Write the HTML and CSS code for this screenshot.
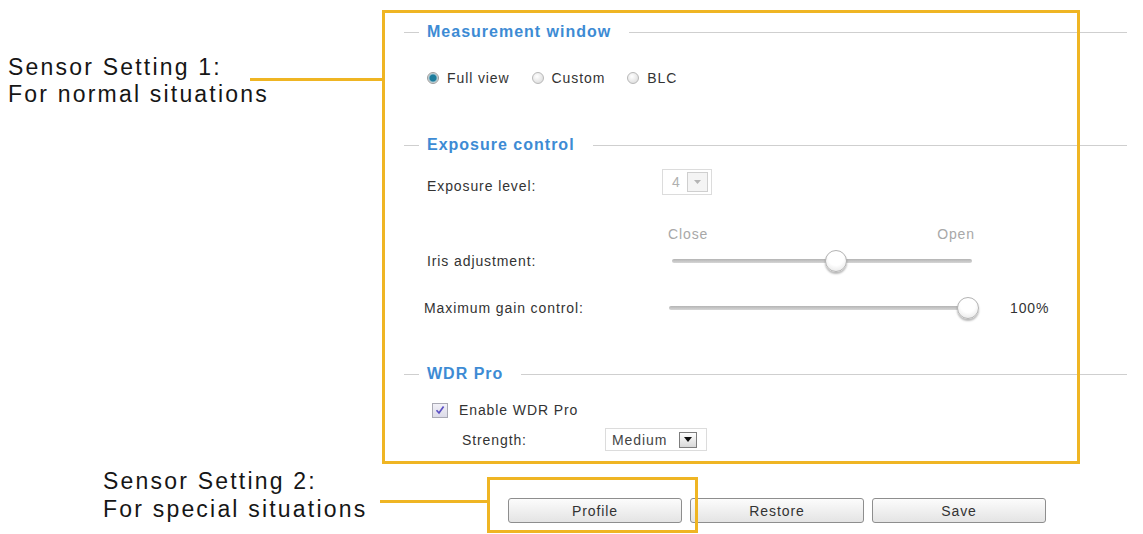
FILE: index.html
```html
<!DOCTYPE html>
<html lang="en">
<head>
<meta charset="utf-8">
<title>Image settings – Exposure</title>
<link rel="stylesheet" href="styles.css">
</head>
<body>
<div class="page">
  <form class="settings">
    <section class="group">
      <div class="legend"><span class="lead"></span><h2>Measurement window</h2><span class="rule"></span></div>
      <div class="radios">
        <label class="radio-opt"><span class="radio checked"></span>Full view</label>
        <label class="radio-opt"><span class="radio"></span>Custom</label>
        <label class="radio-opt"><span class="radio"></span>BLC</label>
      </div>
    </section>

    <section class="group group-exposure">
      <div class="legend"><span class="lead"></span><h2>Exposure control</h2><span class="rule"></span></div>
      <div class="field field-level">
        <span class="field-label">Exposure level:</span>
        <div class="control">
          <span class="select select-disabled">
            <span class="select-value">4</span>
            <span class="select-btn"><svg width="7" height="4" viewBox="0 0 7 4"><path d="M0 0h7L3.5 4z" fill="#b4b4b4"/></svg></span>
          </span>
        </div>
      </div>
      <div class="field field-scale">
        <span></span>
        <div class="scale-labels"><span>Close</span><span>Open</span></div>
      </div>
      <div class="field field-slider">
        <span class="field-label">Iris adjustment:</span>
        <div class="control">
          <div class="slider"><div class="track"><span class="thumb" style="left: 54.7%"></span></div></div>
        </div>
      </div>
      <div class="field field-slider field-gain">
        <span class="field-label">Maximum gain control:</span>
        <div class="control">
          <div class="slider slider-gain"><div class="track"><span class="thumb" style="left: 100%"></span></div></div>
          <span class="slider-value">100%</span>
        </div>
      </div>
    </section>

    <section class="group group-wdr">
      <div class="legend"><span class="lead"></span><h2>WDR Pro</h2><span class="rule"></span></div>
      <label class="check-row">
        <span class="checkbox"><svg width="10" height="10" viewBox="0 0 10 10"><path d="M1.5 5.2 4 8 8.6 1.4" fill="none" stroke="#5b4fc4" stroke-width="1.7"/></svg></span>
        Enable WDR Pro
      </label>
      <div class="strength-row">
        <span class="strength-label">Strength:</span>
        <span class="select select-strength">
          <span class="select-value">Medium</span>
          <span class="select-btn select-btn-dark"><svg width="8" height="5" viewBox="0 0 8 5"><path d="M0 0h8L4 5z" fill="#111"/></svg></span>
        </span>
      </div>
    </section>

    <div class="actions">
      <button type="button" class="btn">Profile</button>
      <button type="button" class="btn">Restore</button>
      <button type="button" class="btn">Save</button>
    </div>
  </form>

  <!-- callouts drawn over the settings form -->
  <p class="note note-1">Sensor Setting 1:<br>For normal situations</p>
  <span class="leader leader-1"></span>
  <span class="frame frame-1"></span>

  <p class="note note-2">Sensor Setting 2:<br>For special situations</p>
  <span class="leader leader-2"></span>
  <span class="frame frame-2"></span>
</div>
</body>
</html>
```
FILE: styles.css
```css
html, body {
  margin: 0;
  background: #fff;
}

body {
  font-family: "Liberation Sans", Arial, sans-serif;
}

.page {
  position: relative;
  width: 1143px;
  height: 534px;
  overflow: hidden;
}

/* ---------- settings form ---------- */
.settings {
  margin-left: 404px;
  width: 723px;
  padding-top: 22px;
  color: #333;
  font-size: 14px;
  letter-spacing: 0.9px;
}

.legend {
  display: flex;
  align-items: center;
  height: 20px;
}

.legend .lead {
  width: 15px;
  height: 1px;
  background: #cfcfcf;
  margin-right: 8px;
}

.legend h2 {
  margin: 0;
  font-size: 16px;
  line-height: 20px;
  font-weight: bold;
  color: #3d8bd4;
  letter-spacing: 1px;
}

.legend .rule {
  flex: 1;
  height: 1px;
  background: #cfcfcf;
  margin-left: 18px;
}

.radios {
  display: flex;
  align-items: center;
  gap: 22px;
  height: 20px;
  margin-top: 26px;
  padding-left: 23px;
}

.radio-opt {
  display: flex;
  align-items: center;
  gap: 8px;
}

.radio {
  width: 12px;
  height: 12px;
  box-sizing: border-box;
  border-radius: 50%;
  border: 1px solid #b8b8b8;
  background: radial-gradient(circle at 40% 35%, #ffffff, #d6d6d6);
}

.radio.checked {
  border-color: #9a9a9a;
  background: radial-gradient(circle, #1d7c9c 0 3px, #7fb3c4 3.8px, #e0e0e0 5px);
}

.group-exposure {
  margin-top: 47px;
}

.field {
  display: grid;
  grid-template-columns: 235px 1fr;
  padding-left: 23px;
}

.field-label {
  line-height: 18px;
}

.control {
  display: flex;
  align-items: center;
}

.field-level {
  margin-top: 13px;
}

.field-level .field-label {
  margin-top: 9px;
}

.select {
  display: inline-flex;
  align-items: center;
  box-sizing: border-box;
  border: 1px solid #dcdcdc;
  background: #fff;
}

.select-disabled {
  height: 26px;
  width: 50px;
  padding: 0 3px 0 9px;
  gap: 6px;
  color: #b0b0b0;
}

.select-btn {
  display: flex;
  align-items: center;
  justify-content: center;
  box-sizing: border-box;
  width: 21px;
  height: 20px;
  border: 1px solid #cfcfcf;
  background: #f4f4f4;
}

.field-scale {
  margin-top: 30px;
}

.scale-labels {
  display: flex;
  justify-content: space-between;
  width: 307px;
  margin-left: 6px;
  line-height: 18px;
  color: #a8a8a8;
}

.field-slider {
  margin-top: 6px;
  height: 24px;
  align-items: center;
}

.field-gain {
  margin-top: 23px;
  margin-left: -3px;
}

.field-gain .control {
  margin-left: 3px;
}

.slider {
  width: 320px;
  height: 24px;
  padding: 0 10px;
  box-sizing: border-box;
  display: flex;
  align-items: center;
}

.slider-gain {
  width: 316px;
  padding-left: 7px;
}

.track {
  position: relative;
  flex: 1;
  height: 4px;
  border-radius: 2px;
  background: linear-gradient(#b4b4b4, #d6d6d6);
}

.thumb {
  position: absolute;
  top: 50%;
  width: 22px;
  height: 22px;
  box-sizing: border-box;
  transform: translate(-50%, -50%);
  border-radius: 50%;
  border: 1px solid #b3b3b3;
  background: radial-gradient(circle at 50% 35%, #ffffff 45%, #e0e0e0);
  box-shadow: 0 2px 2px rgba(0, 0, 0, 0.28);
}

.slider-value {
  margin-left: 32px;
}

.group-wdr {
  margin-top: 44px;
}

.check-row {
  display: flex;
  align-items: center;
  gap: 11px;
  height: 18px;
  margin-top: 17px;
  padding-left: 28px;
}

.checkbox {
  display: flex;
  align-items: center;
  justify-content: center;
  box-sizing: border-box;
  width: 16px;
  height: 15px;
  border: 1px solid #a9a9b4;
  background: linear-gradient(#f2f1f8, #dcdbe8);
}

.strength-row {
  display: flex;
  align-items: center;
  height: 23px;
  margin-top: 9px;
  padding-left: 58px;
}

.strength-label {
  width: 143px;
}

.select-strength {
  width: 102px;
  height: 23px;
  padding: 0 9px 0 6px;
  justify-content: space-between;
  color: #444;
}

.select-btn-dark {
  width: 18px;
  height: 16px;
  border-color: #7d7d7d;
  background: linear-gradient(#ffffff, #d8d8d8);
}

.actions {
  display: flex;
  gap: 8px;
  margin-top: 47px;
  padding-left: 104px;
}

.btn {
  width: 174px;
  height: 25px;
  border: 1px solid #8e8e8e;
  border-radius: 3px;
  background: linear-gradient(#fcfcfc, #e4e4e4);
  font-family: inherit;
  font-size: 14px;
  letter-spacing: 0.9px;
  color: #333;
  padding: 0;
}

/* ---------- callouts ---------- */
.note {
  position: absolute;
  margin: 0;
  font-size: 23px;
  line-height: 27px;
  letter-spacing: 2.2px;
  color: #161616;
}

.note-1 {
  left: 8px;
  top: 54px;
}

.note-2 {
  left: 103px;
  top: 467px;
  line-height: 28px;
}

.leader {
  position: absolute;
  height: 3px;
  background: #efb523;
}

.leader-1 {
  left: 250px;
  top: 78px;
  width: 133px;
}

.leader-2 {
  left: 380px;
  top: 500px;
  width: 108px;
}

.frame {
  position: absolute;
  box-sizing: border-box;
  border: 3px solid #efb523;
}

.frame-1 {
  left: 382px;
  top: 10px;
  width: 698px;
  height: 454px;
}

.frame-2 {
  left: 487px;
  top: 477px;
  width: 211px;
  height: 56px;
}
```
